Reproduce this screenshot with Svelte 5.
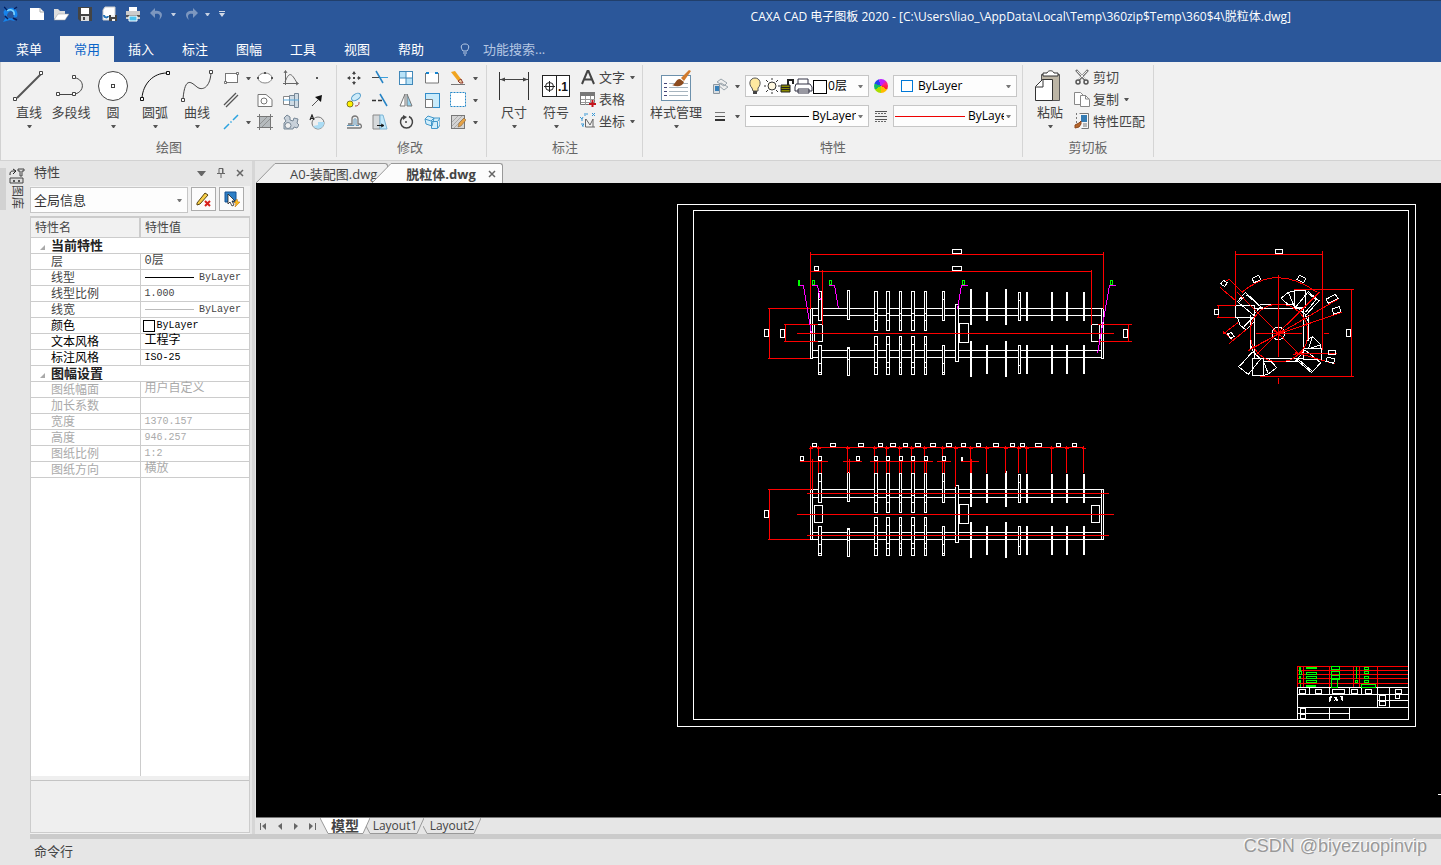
<script lang="ts">
    type Tool = { icon: string; name: string; menu?: boolean };
    type Bar = { x: number; w: number; top: number[]; bottom: number[]; kind: string };

    const menus = ["菜单", "常用", "插入", "标注", "图幅", "工具", "视图", "帮助"];
    let activeMenu = $state("常用");

    const icons: Record<string, string> = {
        rect: `<rect x="2.5" y="3.5" width="12" height="9" fill="#fff" stroke="#777"/><path d="M1.500 11.500h2v2h-2zM13.500 2.500h2v2h-2z" fill="#fff" stroke="#444" stroke-width=".7"/>`,
        parallel: `<path d="M1 13L13 1M3 15L15 3" stroke="#555" stroke-width="1.3"/>`,
        center: `<path d="M1 15L6 10M10 6L15 1M7.500 8.500l1-1" stroke="#2ba3e0" stroke-width="1.5"/>`,
        ellipse: `<ellipse cx="8" cy="8" rx="7" ry="5" fill="#fff" stroke="#888"/><path d="M0 7h2v2H0zM14 7h2v2h-2zM7 2h2v2H7z" fill="#555"/>`,
        hole: `<path d="M1 2.500h8l6 5v7H1z" fill="#fff" stroke="#777"/><circle cx="7" cy="9" r="3" fill="#fff" stroke="#777"/>`,
        hatch: `<rect x="3" y="3" width="10" height="10" fill="#b5babd"/><path d="M2.500 0v16M13.500 0v16M0 2.500h16M0 13.500h16" stroke="#777"/><path d="M3 10l7-7M5 13l8-8" stroke="#777" stroke-width=".6"/>`,
        curve: `<path d="M2.500 1v14M0 13.500h15M2 12C6 2 8 2 14 13" fill="none" stroke="#666"/><path d="M1 3l1.500-2.500L4 3M13 12l2.500 1.500L13 15" fill="none" stroke="#666"/>`,
        shaft: `<path d="M.5 4.500h6v8h-6z" fill="#fff" stroke="#888"/><path d="M6.500 3.500h5v10h-5zM11.500 1.500h4v14h-4z" fill="#cfdbe4" stroke="#778796"/><path d="M0 8h16" stroke="#58a9dc"/>`,
        gear: `<path d="M1 4l3-3 3 2v3l3 1 1-3 4 1-1 4 2 2-2 3-3-1-1 2H1V9l2-2z" fill="#c8d1da" stroke="#778796"/><circle cx="5" cy="11.500" r="3" fill="#f0f0f0" stroke="#778796"/>`,
        point: `<rect x="7" y="7" width="2" height="2" fill="#555"/>`,
        arrow: `<path d="M3 14l6-6" stroke="#555"/><path d="M13 3l-1 7-6-5z" fill="#111"/>`,
        detail: `<circle cx="9" cy="9" r="6" fill="#eee" stroke="#777"/><path d="M9 8h6a6 6 0 0 1-11 4l5-1z" fill="#abdcf4"/><path d="M1 6l2-5 2 5M2 4.500h2" fill="none" stroke="#222" stroke-width="1.200"/>`,
        move: `<path d="M8 2v3M8 11v3M2 8h3M11 8h3" stroke="#444"/><path d="M8 1l2 3H6zM8 15l2-3H6zM1 8l3-2v4zM15 8l-3-2v4z" fill="#444"/><rect x="7" y="7" width="2" height="2" fill="#444"/>`,
        trim: `<path d="M0 7.500h7" stroke="#444"/><path d="M8 7.500h8" stroke="#3ea0dc"/><path d="M4 1l7 12" stroke="#2583c5" stroke-width="1.500"/>`,
        array: `<rect x="1.500" y="1.500" width="13" height="13" fill="#fff" stroke="#4188b9"/><path d="M2 2h6v6H2zM8 8h6v6H8z" fill="#b9e3f8"/><path d="M8 1v14M1 8h14" stroke="#4188b9"/>`,
        stretch: `<path d="M1.500 3v10h13V3" fill="#fff" stroke="#777"/><path d="M2 3h3M11 3h3" stroke="#1683ce" stroke-width="2"/>`,
        pencil: `<path d="M1 14.500h14" stroke="#777"/><path d="M1 2l4-1 6 8-3 2z" fill="#f0a41f"/><path d="M8 11l3-2 2 4h-3z" fill="#e9c9a0" stroke="#8d3527"/>`,
        copy: `<ellipse cx="10" cy="5" rx="5" ry="3" transform="rotate(-35 10 5)" fill="#cceaf8" stroke="#4e9ac9"/><circle cx="4" cy="12" r="3" fill="#fff100" stroke="#7f7a20"/><path d="M9 14c4 0 4-2 4-4" fill="none" stroke="#a53e3e"/>`,
        extend: `<path d="M0 8.500h4M6 8.500h4" stroke="#333" stroke-width="1.500"/><path d="M8 2l7 12" stroke="#2583c5" stroke-width="1.500"/>`,
        mirror: `<path d="M7 2v12H2z" fill="#fff" stroke="#777"/><path d="M9 2v12h5z" fill="#97d3ef" stroke="#777"/>`,
        scale: `<rect x="1.500" y="1.500" width="14" height="14" fill="#c9ebfb" stroke="#338dca"/><path d="M1.500 7.500h7v8h-7z" fill="#fff" stroke="#777"/>`,
        select: `<rect x=".5" y=".5" width="15" height="14" fill="#fff" stroke="#2588c9" stroke-dasharray="2 1"/>`,
        offset: `<path d="M1 14h13c2 0 2-4-1-4h-1V5c0-4-6-4-6 0v5H2" fill="none" stroke="#777" stroke-width="1.300"/><path d="M1 11.500h7v-6c0-1 2-1 2 0v6h3" fill="none" stroke="#6096b9"/>`,
        taper: `<path d="M1 1h7v14H1z" fill="#d6d9db" stroke="#888"/><path d="M8 1h3l4 14H8z" fill="#c2e8fa" stroke="#7db4d4"/><path d="M5 11.500h6M9 10l3 1.500L9 13" fill="none" stroke="#111"/>`,
        rotate: `<path d="M6 2.500a6 6 0 1 0 5 0" fill="none" stroke="#444" stroke-width="1.500"/><path d="M5 1l4 2-4 3z" fill="#444"/><circle cx="8" cy="8" r="1" fill="#444"/>`,
        block: `<path d="M1 5l3-3 6 2-2 8-6-2zM1 5l6 2M7.500 7.500h6v7h-6zM7 7l3-3h6l-2 3M14 14l2-3V4" fill="#d2eefb" stroke="#4398ca"/>`,
        edit: `<rect x="1.500" y="1.500" width="13" height="13" fill="#d4d4d4" stroke="#777"/><path d="M2 12L12 2M4 14L14 4M2 8l6-6" stroke="#aaa"/><path d="M8 13l1-4 5-5 2 2-5 6z" fill="#e5a246" stroke="#785a37" stroke-width=".5"/>`,
        text: `<path d="M2 15L7.500 2h1L14 15M4 10.500h8" fill="none" stroke="#444" stroke-width="2"/>`,
        table: `<path d="M.5 1.500h14v12H.5z" fill="#fff" stroke="#777"/><path d="M0 1h15v4H0z" fill="#777"/><path d="M1 8.500h14M1 11.500h14M5.500 5v9M10.500 5v9" stroke="#999"/><path d="M9 13h7M12.500 9v7" stroke="#c4141b" stroke-width="2"/>`,
        coord: `<path d="M5.500 6v8H15M6 6l4 6 3-6v8" fill="none" stroke="#666"/><path d="M0 4l2 2 1-2M2 6v2M5 0v3M6 1h2M12 0l3 3M15 0l-3 3M1 11h3l-2 2h2" fill="none" stroke="#3697d6"/>`,
        layers: `<path d="M5 4l4-3 6 4-3 3zM6 7l3-2 7 4-4 3z" fill="#eee" stroke="#9aa4ac"/><path d="M1.500 6.500h6v9h-6z" fill="#d7dde2" stroke="#8c97a0"/><rect x="3" y="8" width="4" height="5" fill="#3780ba"/>`,
        lines: `<path d="M3 4.500h10" stroke="#777"/><path d="M3 8.500h10" stroke="#555"/><path d="M3 12h10" stroke="#333" stroke-width="2"/>`,
        cut: `<path d="M2 1l9 10M14 1L5 11" stroke="#777" stroke-width="2.500"/><path d="M3 2l9 9M13 2l-9 9" stroke="#eee"/><circle cx="4" cy="13" r="2" fill="none" stroke="#555" stroke-width="1.500"/><circle cx="12" cy="13" r="2" fill="none" stroke="#555" stroke-width="1.500"/>`,
        duplicate: `<path d="M.5 1.500h6l3 3v9h-9z" fill="#fff" stroke="#888"/><path d="M6.500 4.500h5l4 4v7h-9z" fill="#fff" stroke="#888"/><path d="M11.500 4v4h4" fill="none" stroke="#888"/>`,
        match: `<path d="M5.500.5h9v15h-7" fill="#f7f7f7" stroke="#777"/><path d="M2.500 0v10" stroke="#777" stroke-dasharray="2"/><rect x="7" y="2" width="6" height="7" fill="#347bb3"/><path d="M9 11h4M9 13h4" stroke="#777"/><path d="M1 12l4-2 2-2v3l-2 3-4 1z" stroke="#8f481e" fill="#b5672c"/>`,
        line: `<path d="M4 28L28 4" stroke="#555" stroke-width="2"/><path d="M.5 27.500h3v3h-3zM26.500 1.500h3v3h-3z" fill="#fff" stroke="#444"/>`,
        polyline: `<path d="M4 24.500h12c15 0 15-17 1-17" fill="none" stroke="#444"/><path d="M1.500 22.500h3v3h-3zM17.500 22.500h3v3h-3zM17.500 5.500h3v3h-3z" fill="#fff" stroke="#444"/>`,
        circle: `<circle cx="16" cy="16" r="14.500" fill="#fff" stroke="#444"/><rect x="14.500" y="14.500" width="3" height="3" fill="#fff" stroke="#444"/>`,
        arc: `<path d="M3 28C4 14 14 3 28 3" fill="none" stroke="#111"/><path d="M1.500 27.500h3v3h-3zM27.500 1.500h3v3h-3z" fill="#fff" stroke="#111"/>`,
        spline: `<path d="M2 29C4 5 11 13 16 17S29 18 30 3" fill="none" stroke="#444"/><path d="M.5 28.500h3v3h-3zM28.500.5h3v3h-3z" fill="#fff" stroke="#444"/>`,
        size: `<path d="M1.500 2v28M30.500 2v28" stroke="#333"/><path d="M2 9.500h28" stroke="#444"/><path d="M2 9.500l5-2v4zM30 9.500l-5-2v4z" fill="#444"/>`,
        symbol: `<rect x="2.500" y="5.500" width="27" height="21" fill="#fff" stroke="#222"/><path d="M16.500 5v22M4 16.500h11M9.500 11v11" stroke="#222"/><circle cx="9.500" cy="16.500" r="4" fill="none" stroke="#222"/><text x="18" y="21" font-family="Liberation Sans" font-size="12" font-weight="700" fill="#111">.1</text>`,
        style: `<rect x="1.500" y="5.500" width="29" height="25" fill="#fff" stroke="#6d91ac"/><path d="M4 13.500h3M4 17.500h3M4 21.500h3M4 25.500h3" stroke="#447"/><path d="M9 13.500h19M9 17.500h19M9 21.500h19M9 25.500h19" stroke="#a6b4be"/><path d="M21 8L29 0l2 1-7 10z" fill="#d17a2d"/><path d="M12 15c4 0 3-6 8-6l4 3c-2 5-7 5-12 3z" fill="#8c4b1e"/>`,
        paste: `<path d="M7.500 4.500h18v26h-18z" fill="#bcb5a5" stroke="#555"/><path d="M9 3h4c1-3 6-3 7 0h4v3H9z" fill="#fff" stroke="#333"/><path d="M8.500 9.500h10v21h-17v-14z" fill="#fff" stroke="#333"/><path d="M9 9v8H2" fill="none" stroke="#333"/>`,
        newFile: `<path d="M1 2h10l4 4v8H1z" fill="#fff"/><path d="M11 2v4h4" fill="none" stroke="#aaa"/>`,
        open: `<path d="M1 13V3h4l2 2h5v3" fill="#ddd"/><path d="M1 14l4-6h11l-4 6z" fill="#fff" stroke="#999" stroke-width=".5"/>`,
        save: `<path d="M1 1h14v14H3l-2-2z" fill="#444"/><path d="M4 2h8v6H4z" fill="#fff"/><path d="M4 10h8v5H4z" fill="#ddd"/><path d="M6 11h2v3H6z" fill="#444"/>`,
        saveAs: `<path d="M4 1h10v13H2V4z" fill="#fff" stroke="#ccc"/><path d="M8 9h8v6H8z" fill="#444"/><path d="M10 9h4v2h-4zM11 13h3v2h-3z" fill="#eee"/><path d="M3 9c0 3 4 3 4 1" stroke="#2776b9" fill="none" stroke-width="2"/>`,
        print: `<path d="M4 1h8v5H4z" fill="#fff"/><path d="M1 5h14v8H1z" fill="#ccc"/><path d="M1 9h14v2H1z" fill="#555"/><path d="M4 10h8v5H4z" fill="#4dc3ef" stroke="#fff"/>`,
        undo: `<path d="M6 2L1 7l5 5V8c5-1 6 2 4 6 6-5 2-10-4-9z" fill="#7d97bf"/>`,
        redo: `<path d="M10 2l5 5-5 5V8c-5-1-6 2-4 6-6-5-2-10 4-9z" fill="#7d97bf"/>`,
        logo: `<path d="M1 1l5 2c6-4 11 2 9 8l-4 1c3-5-2-9-5-5s1 6 4 5l3 3-5-1-7 2 3-5C1 8 1 5 3 4z" fill="#1683eb"/><path d="M2 1l4 4M12 3l3-2M3 10l3 3M11 12l4 2" stroke="#061d5c" stroke-width="1.500"/><path d="M5 5c4-3 8 0 7 4" fill="none" stroke="#80d6ff" stroke-width="1.500"/>`,
    };

    const quick: Tool[] = [
        { icon: "newFile", name: "新建" },
        { icon: "open", name: "打开" },
        { icon: "save", name: "保存" },
        { icon: "saveAs", name: "另存为" },
        { icon: "print", name: "打印" },
        { icon: "undo", name: "撤销", menu: true },
        { icon: "redo", name: "重做", menu: true },
    ];

    const drawBig: Tool[] = [
        { icon: "line", name: "直线", menu: true },
        { icon: "polyline", name: "多段线" },
        { icon: "circle", name: "圆", menu: true },
        { icon: "arc", name: "圆弧", menu: true },
        { icon: "spline", name: "曲线", menu: true },
    ];
    const drawSmall: Tool[][] = [
        [{ icon: "rect", name: "矩形", menu: true }, { icon: "parallel", name: "平行线" }, { icon: "center", name: "中心线", menu: true }],
        [{ icon: "ellipse", name: "椭圆" }, { icon: "hole", name: "孔" }, { icon: "hatch", name: "剖面线" }],
        [{ icon: "curve", name: "公式曲线" }, { icon: "shaft", name: "轴" }, { icon: "gear", name: "齿轮" }],
        [{ icon: "point", name: "点" }, { icon: "arrow", name: "箭头" }, { icon: "detail", name: "局部放大" }],
    ];
    const modifySmall: Tool[][] = [
        [{ icon: "move", name: "平移" }, { icon: "copy", name: "平移复制" }, { icon: "offset", name: "等距线" }],
        [{ icon: "trim", name: "裁剪" }, { icon: "extend", name: "延伸" }, { icon: "taper", name: "拉伸" }],
        [{ icon: "array", name: "阵列" }, { icon: "mirror", name: "镜像" }, { icon: "rotate", name: "旋转" }],
        [{ icon: "stretch", name: "打断" }, { icon: "scale", name: "缩放" }, { icon: "block", name: "分解" }],
        [{ icon: "pencil", name: "删除", menu: true }, { icon: "select", name: "过渡", menu: true }, { icon: "edit", name: "编辑", menu: true }],
    ];
    const noteRows: Tool[] = [
        { icon: "text", name: "文字", menu: true },
        { icon: "table", name: "表格" },
        { icon: "coord", name: "坐标", menu: true },
    ];
    const clipRows: Tool[] = [
        { icon: "cut", name: "剪切" },
        { icon: "duplicate", name: "复制", menu: true },
        { icon: "match", name: "特性匹配" },
    ];

    const sections = [
        {
            title: "当前特性",
            rows: [
                { name: "层", value: "0层", tone: "mid" },
                { name: "线型", value: "ByLayer", tone: "mid", sample: "black" },
                { name: "线型比例", value: "1.000", tone: "mid" },
                { name: "线宽", value: "ByLayer", tone: "mid", sample: "#bbb" },
                { name: "颜色", value: "ByLayer", tone: "dark", swatch: true },
                { name: "文本风格", value: "工程字", tone: "dark" },
                { name: "标注风格", value: "ISO-25", tone: "dark" },
            ],
        },
        {
            title: "图幅设置",
            rows: [
                { name: "图纸幅面", value: "用户自定义", tone: "off" },
                { name: "加长系数", value: "", tone: "off" },
                { name: "宽度", value: "1370.157", tone: "off" },
                { name: "高度", value: "946.257", tone: "off" },
                { name: "图纸比例", value: "1:2", tone: "off" },
                { name: "图纸方向", value: "横放", tone: "off" },
            ],
        },
    ] as { title: string; rows: { name: string; value: string; tone: string; sample?: string; swatch?: boolean }[] }[];

    const hasHan = (text: string) => /\p{Script=Han}/u.test(text);

    // top / bottom: start, end, then the cross lines inside the bar
    const long = { top: [291, 330, 313, 320], bottom: [336, 374, 344, 362, 367], kind: "open" };
    const short = { top: [292, 320], bottom: [345, 373], kind: "solid" };
    const tall = { top: [289, 324], bottom: [341, 376], kind: "solid" };
    const bars: Bar[] = [
        { x: 818, w: 3, top: [291, 320, 299], bottom: [345, 374, 363, 372], kind: "open" },
        { x: 847, w: 2, top: [290, 319], bottom: [347, 375, 348, 359], kind: "open" },
        { x: 874, w: 3, ...long },
        { x: 886, w: 3, ...long },
        { x: 899, w: 2, ...long },
        { x: 911, w: 3, ...long },
        { x: 924, w: 2, ...long },
        { x: 942, w: 2, top: [291, 320, 299], bottom: [345, 374, 363, 372], kind: "open" },
        { x: 970, w: 1, ...tall },
        { x: 986, w: 1, ...short },
        { x: 1005, w: 1, ...tall },
        { x: 1018, w: 2, top: [292, 320, 300], bottom: [345, 373, 365], kind: "open" },
        { x: 1026, w: 1, ...short },
        { x: 1051, w: 1, ...short },
        { x: 1066, w: 1, ...short },
        { x: 1083, w: 1, ...short },
    ];
    const chain = [810, 818, 847, 874, 886, 899, 911, 924, 942, 955, 970, 986, 1005, 1018, 1026, 1051, 1066, 1083];
    const chainLabels = [[812, 4], [830, 5], [858, 5], [878, 4], [890, 5], [903, 4], [915, 5], [930, 5], [946, 5], [961, 4], [976, 4], [993, 5], [1010, 4], [1020, 4], [1035, 6], [1056, 4], [1072, 4]];
    const widthLabels = [800, 818, 856, 874, 886, 899, 911, 924, 942];
    const widthMarks = [812, 821, 849, 877, 889, 901, 914, 926, 944, 971];
    const widthLines = [[799, 827], [842, 861], [869, 932], [936, 950], [960, 978]];
    const greenCells = [[6, 2, 2, 9], [26, 3, 32, 4], [101, 0, 26, 10], [176, 2, 2, 9], [200, 3, 14, 6], [5, 14, 8, 11], [26, 18, 32, 7], [101, 14, 24, 22], [176, 14, 2, 12], [200, 15, 14, 7], [6, 29, 4, 7], [26, 30, 32, 6], [101, 27, 24, 12], [176, 29, 2, 6], [200, 30, 14, 7], [6, 42, 4, 7], [26, 42, 32, 6], [101, 39, 20, 23], [173, 41, 8, 7], [200, 41, 14, 8], [9, 54, 1, 7], [26, 57, 28, 4], [191, 54, 44, 8]];
    const whiteCells = [[6, 68, 18, 13], [54, 68, 18, 13], [105, 68, 36, 13], [162, 68, 18, 13], [204, 68, 18, 13], [293, 68, 19, 13], [246, 86, 17, 15], [246, 104, 18, 14], [293, 84, 13, 12], [9, 126, 15, 14], [9, 143, 15, 14]];
    const blades = [
        "M112 200L136 172L182 215L160 240Z",
        "M140 180L180 213M115 204L130 186",
        "M108 213H163V247H108Z",
        "M112 247L120 270L138 285L163 260M132 275L160 247",
        "M243 190L265 172L283 168M243 190L272 215M265 172L283 215",
        "M283 166H316V218H283Z",
        "M288 215L325 170L357 197L318 240Z",
        "M348 195L316 232M325 175L350 195",
        "M318 318L338 304L362 330L363 340M338 304L326 338M362 330L330 340",
        "M310 340H365V373H310Z",
        "M290 375L335 413L362 383L315 345Z",
        "M296 374L336 408",
        "M157 372H190V422H157Z",
        "M115 395L145 418L182 372L160 350Z",
        "M120 392L158 350",
        "M190 422L205 417L230 398L207 372M205 417L190 378",
    ];
    const tags = ["M62 147l8-11 12 7-8 12z", "M156 130l20-9 6 13-20 9z", "M298 121l19 9-6 13-20-9z", "M378 193l28-15 8 12-28 15z", "M396 222l22-7 5 15-22 7z", "M83 297l10-5 9 12-10 7z", "M387 346h19v13h-19z", "M382 366l23 6-4 13-23-6z"];
</script>

{#snippet glyph(name: string, size: number)}
    <svg width={size} height={size} viewBox="0 0 {size} {size}" aria-hidden="true">{@html icons[name]}</svg>
{/snippet}

{#snippet caret()}
    <svg class="caret" width="5" height="3" viewBox="0 0 5 3" aria-hidden="true"><path d="M0 0h5L3 3H2z" /></svg>
{/snippet}

{#snippet bigTool(tool: Tool)}
    <button class="big">
        {@render glyph(tool.icon, 32)}
        <span>{tool.name}</span>
        {#if tool.menu}{@render caret()}{/if}
    </button>
{/snippet}

{#snippet toolColumns(columns: Tool[][])}
    {#each columns as column}
        <div class="column">
            {#each column as tool}
                <button class="small" class:has-menu={tool.menu} aria-label={tool.name}>
                    {@render glyph(tool.icon, 16)}
                    {#if tool.menu}{@render caret()}{/if}
                </button>
            {/each}
        </div>
    {/each}
{/snippet}

{#snippet toolRows(rows: Tool[])}
    <div class="column rows">
        {#each rows as tool}
            <button class="row-tool">
                {@render glyph(tool.icon, 16)}
                <span>{tool.name}</span>
                {#if tool.menu}{@render caret()}{/if}
            </button>
        {/each}
    </div>
{/snippet}

{#snippet drum(dy: number)}
    <path class="white" d="M810 {308 + dy}H1103M812 {315 + dy + (dy ? 1 : 0)}H1101M812 {350 + dy + (dy ? 1 : 0)}H1101M810 {357 + dy + (dy ? 1 : 0)}H1103" />
    {#each bars as bar}
        {@const up = dy ? dy + 1 : 0}
        <rect class={bar.kind} x={bar.x} y={bar.top[0] + up} width={bar.w} height={bar.top[1] - bar.top[0]} />
        <rect class={bar.kind} x={bar.x} y={bar.bottom[0] + dy} width={bar.w} height={bar.bottom[1] - bar.bottom[0]} />
        {#each bar.top.slice(2) as y}
            <path class="white" d="M{bar.x} {y + up}h{bar.w}" />
        {/each}
        {#each bar.bottom.slice(2) as y}
            <path class="white" d="M{bar.x} {y + dy}h{bar.w}" />
        {/each}
    {/each}
    <rect class="open" x="810" y={308 + dy} width="2" height="50" />
    <rect class="open" x="1101" y={308 + dy} width="2" height="50" />
    <rect class="open" x="955" y={304 + dy} width="3" height="57" />
    <rect class="open" x="959" y={323 + dy} width="9" height="19" />
    <rect class="white" x="814" y={324 + dy} width="8" height="17" />
    <rect class="white" x="1091" y={324 + dy} width="8" height="17" />
    <path class="red" d="M796 {333 + dy}H1113M767 {308 + dy}H809M767 {358 + dy}H809M769 {308 + dy}v50" />
    <rect class="white" x="764" y={329 + dy} width="4" height="7" />
{/snippet}

<div class="app">
    <header>
        <div class="titlebar">
            <button class="logo" aria-label="CAXA">{@render glyph("logo", 16)}</button>
            {#each quick as tool}
                <button class="quick" aria-label={tool.name}>{@render glyph(tool.icon, 16)}</button>
                {#if tool.menu}
                    <button class="quick-menu" aria-label="{tool.name}列表">{@render caret()}</button>
                {/if}
            {/each}
            <button class="quick-menu" aria-label="自定义">
                <svg width="6" height="7" viewBox="0 0 6 7"><path d="M0 0h6v1H0zM0 2h6L3 6z" fill="#d3dae6" /></svg>
            </button>
            <h1>CAXA CAD 电子图板 2020 - [C:\Users\liao_\AppData\Local\Temp\360zip$Temp\360$4\脱粒体.dwg]</h1>
        </div>
        <nav>
            {#each menus as menu}
                <button class:active={menu === activeMenu} onclick={() => (activeMenu = menu)}>{menu}</button>
            {/each}
            <label class="search">
                <svg width="10" height="14" viewBox="0 0 10 14"><path d="M3 9C0 5 1 2 5 2s5 3 2 7zM3 11h4M4 13h2" fill="none" stroke="#b9cbe6" /></svg>
                <input type="text" placeholder="功能搜索..." />
            </label>
        </nav>
    </header>

    <div class="ribbon">
        <section class="draw">
            <div class="tools">
                {#each drawBig as tool}{@render bigTool(tool)}{/each}
                {@render toolColumns(drawSmall)}
            </div>
            <h2>绘图</h2>
        </section>
        <section class="modify">
            <div class="tools">{@render toolColumns(modifySmall)}</div>
            <h2>修改</h2>
        </section>
        <section>
            <div class="tools">
                {@render bigTool({ icon: "size", name: "尺寸", menu: true })}
                {@render bigTool({ icon: "symbol", name: "符号", menu: true })}
                {@render toolRows(noteRows)}
            </div>
            <h2>标注</h2>
        </section>
        <section class="props">
            <div class="tools">
                {@render bigTool({ icon: "style", name: "样式管理", menu: true })}
                <div class="combos">
                    <button class="small" aria-label="图层">{@render glyph("layers", 16)}{@render caret()}</button>
                    <div class="combo">
                        <svg width="82" height="18" viewBox="0 0 82 18" aria-hidden="true">
                            <path d="M6 11C2 7 4 1 9 1s7 6 3 10v3H7z" fill="#ffe9a0" stroke="#555" />
                            <path d="M7 14h4v3H7z" fill="#444" />
                            <circle cx="26" cy="9" r="4" fill="#fff8df" stroke="#333" />
                            <path d="M26 1v2M26 15v2M18 9h2M32 9h2M20 3l2 2M32 3l-2 2M20 15l2-2M32 15l-2-2" stroke="#333" />
                            <path d="M35 8h9v7h-9z" fill="#8b8a00" stroke="#222" />
                            <path d="M35 10.500h9M35 12.500h9" stroke="#222" />
                            <path d="M42 8V3h5v4" fill="none" stroke="#222" stroke-width="2" />
                            <path d="M52 7V2h10v5M50 7h14l2 3v4H49v-4zM52 12h11v4H52z" fill="#fff" stroke="#334" />
                            <rect x="67.500" y="3.500" width="13" height="13" fill="#fff" stroke="#000" />
                        </svg>
                        <select aria-label="当前层"><option>0层</option></select>
                        {@render caret()}
                    </div>
                    <button class="wheel" aria-label="颜色"></button>
                    <div class="combo">
                        <svg width="24" height="14" viewBox="0 0 24 14" aria-hidden="true"><rect x="7.500" y="1.500" width="11" height="11" fill="#fff" stroke="#0078d7" /></svg>
                        <select aria-label="当前颜色"><option>ByLayer</option></select>
                        {@render caret()}
                    </div>
                    <button class="small" aria-label="线宽">{@render glyph("lines", 16)}{@render caret()}</button>
                    <div class="combo">
                        <svg width="66" height="3" viewBox="0 0 66 3" aria-hidden="true"><path d="M4 1.500h59" stroke="#000" /></svg>
                        <select aria-label="当前线型"><option>ByLayer</option></select>
                        {@render caret()}
                    </div>
                    <button class="line-style" aria-label="线宽设置">
                        <svg width="12" height="11" viewBox="0 0 12 11"><path d="M0 .5h12M0 5.500h12M0 8.500h12" stroke="#555" /><path d="M0 2.500h12M0 10.500h12" stroke="#666" stroke-dasharray="2 1" /></svg>
                    </button>
                    <div class="combo">
                        <svg width="74" height="3" viewBox="0 0 74 3" aria-hidden="true"><path d="M1 1.500h70" stroke="#e00" /></svg>
                        <select aria-label="当前线宽"><option>ByLayer</option></select>
                        {@render caret()}
                    </div>
                </div>
            </div>
            <h2>特性</h2>
        </section>
        <section class="clip">
            <div class="tools">
                {@render bigTool({ icon: "paste", name: "粘贴", menu: true })}
                {@render toolRows(clipRows)}
            </div>
            <h2>剪切板</h2>
        </section>
    </div>

    <main>
        <aside class="dock">
            <button class="library">
                <svg width="16" height="16" viewBox="0 0 16 16" aria-hidden="true">
                    <path d="M1 7c0-4 1-4 5-4M4 1l3 2-3 3" fill="none" stroke="#222" />
                    <path d="M9 1h6v2h-2v5h-2V3H9zM1 10h13v5H1z" fill="#ddd" stroke="#444" />
                    <path d="M4 12h2v2H4zM9 12h2v2H9z" fill="#555" />
                </svg>
                <span>图库</span>
            </button>
        </aside>

        <aside class="panel">
            <div class="panel-head">
                <h3>特性</h3>
                <button aria-label="菜单"><svg width="9" height="5" viewBox="0 0 9 5"><path d="M0 0h9L5 5H4z" fill="#666" /></svg></button>
                <button aria-label="固定"><svg width="8" height="10" viewBox="0 0 8 10"><path d="M2 .5h4v5H2zM0 5.500h8M4 6v4M5.500 1v4" fill="none" stroke="#666" /></svg></button>
                <button aria-label="关闭"><svg width="8" height="8" viewBox="0 0 8 8"><path d="M1 1l6 6M7 1L1 7" stroke="#666" stroke-width="1.500" /></svg></button>
            </div>
            <div class="panel-bar">
                <div class="combo scope">
                    <select aria-label="对象"><option>全局信息</option></select>
                    {@render caret()}
                </div>
                <button aria-label="取消选择">
                    <svg width="16" height="16" viewBox="0 0 16 16"><path d="M1 12L9 2l3 2-8 9-3 1z" fill="#f7cf47" stroke="#584312" /><path d="M9 10l5 5M14 10l-5 5" stroke="#d8221c" stroke-width="2" /></svg>
                </button>
                <button aria-label="快速选择">
                    <svg width="16" height="16" viewBox="0 0 16 16"><path d="M1 1h11v10H1z" fill="#2d7fc6" stroke="#145394" /><path d="M4 3v10l2-2 2 4 2-1-2-4h3z" fill="#fff" stroke="#222" stroke-width=".8" /><path d="M13 8l-3 4h2l-1 4 5-5h-2z" fill="#ffbe1a" stroke="#b56810" stroke-width=".5" /></svg>
                </button>
            </div>
            <div class="sheet">
                <table>
                    <thead>
                        <tr><th>特性名</th><th>特性值</th></tr>
                    </thead>
                    <tbody>
                        {#each sections as section}
                            <tr class="section"><td colspan="2"><i></i>{section.title}</td></tr>
                            {#each section.rows as row}
                                <tr class={row.tone}>
                                    <td>{row.name}</td>
                                    <td>
                                        <div class="value" class:han={hasHan(row.value)}>
                                            {#if row.sample}<span class="sample" style="background: {row.sample}"></span>{/if}
                                            {#if row.swatch}<span class="swatch"></span>{/if}
                                            {row.value}
                                        </div>
                                    </td>
                                </tr>
                            {/each}
                        {/each}
                    </tbody>
                </table>
                <div class="blank"><div></div><div></div></div>
                <div class="hint"></div>
            </div>
        </aside>

        <div class="workspace">
            <div class="doc-tabs">
                <button>
                    <svg width="20" height="20" viewBox="0 0 20 20" aria-hidden="true"><path d="M0 20L19 .5H20V20z" fill="#f0f0f0" /><path d="M0 20L19 .5h1" fill="none" stroke="#999" /></svg>
                    <span>A0-装配图.dwg</span>
                </button>
                <button class="current">
                    <svg width="20" height="20" viewBox="0 0 20 20" aria-hidden="true"><path d="M0 20L19 .5H20V20z" fill="#fcfcfc" /><path d="M0 20L19 .5h1" fill="none" stroke="#999" /></svg>
                    <span>
                        脱粒体.dwg
                        <svg width="8" height="8" viewBox="0 0 8 8" aria-hidden="true"><path d="M1 1l6 6M7 1L1 7" stroke="#666" stroke-width="1.500" /></svg>
                    </span>
                </button>
            </div>

            <svg class="drawing" viewBox="256 183 1185 634" preserveAspectRatio="xMidYMid meet" role="img" aria-label="脱粒体">
                <g transform="translate(.5 .5)">
                    <rect class="white" x="677" y="204" width="738" height="522" />
                    <rect class="white" x="693" y="210" width="715" height="509" />

                    {@render drum(0)}
                    <path class="red" d="M810 254H1103M810 251V308M1103 251V308M810 271H1091M822 269V324M1091 269V324" />
                    <path class="red" d="M783 324H817M783 341H817M785 324V341M1097 324H1131M1097 341H1131M1128 324V341" />
                    <path class="white" d="M952 249h9v4h-9zM952 266h9v4h-9zM814 266h4v4h-4zM780 329h4v8h-4zM1123 329h4v8h-4z" />
                    <path class="magenta" d="M797 285H803L811 333M811 285H817L820 300M828 285H834L838 308M967 285H961L957 309M1115 285H1109L1097 353" />
                    <path class="green" d="M798 280h1v5h-1zM812 280h2v4h-2zM829 280h2v4h-2zM962 280h2v4h-2zM1110 280h2v4h-2z" />

                    {@render drum(181)}
                    <path class="red" d="M806 493H1108M806 535H1108M810 447H1083" />
                    {#each chain as x}
                        <path class="red" d="M{x} 445V{x === 810 ? 489 : x === 955 ? 486 : 472}M{x - 2} 448h4" />
                    {/each}
                    {#each widthMarks as x}
                        <path class="red" d="M{x} 458V{x === 812 ? 489 : 472}" />
                    {/each}
                    {#each widthLines as [from, to]}
                        <path class="red" d="M{from} 461H{to}" />
                    {/each}
                    {#each chainLabels as [x, w]}
                        <rect class="open" {x} y="443" width={w} height="3" />
                    {/each}
                    {#each widthLabels as x}
                        <rect class="open" {x} y="456" width="3" height="4" />
                    {/each}
                    <path class="white" d="M961 456v4M962 456v4" />
                </g>

                <!-- end view, three units to a pixel -->
                <g transform="translate(1200 235) scale(.3333)">
                    {#each blades as d}
                        <path class="white" {d} />
                    {/each}
                    <rect class="white" x="163" y="220" width="148" height="151" />
                    <path class="white" d="M180 208H285M192 380H297M151 240V345M325 240V318M175 210L190 220M285 378L300 370M316 240L325 260M151 330L160 350" />
                    <circle class="white" cx="235" cy="295" r="19" />
                    <circle class="red" cx="237" cy="294" r="87" />
                    <path class="red" d="M107 58H367M107 48V213M367 48V345M283 163H462M180 424H462M455 163V424" />
                    <path class="red" d="M235 120V366M235 430V447M168 295H306M371 295H387M125 172Q180 127 235 128T352 172" />
                    <path class="red" d="M112 172L300 360M358 172L168 360M145 347L235 297L418 190M155 340L235 297L425 232M285 357H412M285 352L405 387M220 285l30 24M220 305l30-20" />
                    <path class="red" d="M75 140L88 133L130 175M60 157L108 198M50 213H108M50 247H105M57 213V247M68 298L115 262M88 325L140 283M70 290L98 317M280 360L310 350" />
                    <path class="white" d="M226 43h21v12h-21zM44 223h12v15h-12zM440 283h12v21h-12z" />
                    {#each tags as d}
                        <path class="white" {d} />
                    {/each}
                </g>

                <!-- parts list and title block -->
                <g transform="translate(1297 666) scale(.3333)">
                    <path class="red" d="M1 1H334M1 13H334M1 25H334M1 39H334M1 52H334M1 1V64M19 1V64M97 1V64M169 1V64M187 1V64M241 1V64" />
                    <path class="white" d="M1 64H334M1 85H334M1 124H334M1 64V160M37 64V85M97 64V85M97 124V160M157 64V85M157 124V160M193 64V85M241 64V124M277 64V124M1 142H157M241 103H334" />
                    <g transform="translate(2 2)">
                        {#each greenCells as [x, y, w, h]}
                            <rect class="green" {x} {y} width={w} height={h} />
                        {/each}
                        {#each whiteCells as [x, y, w, h]}
                            <rect class="white" {x} {y} width={w} height={h} />
                        {/each}
                    </g>
                    <path class="white" d="M98 92V108M101 90V104M104 90V96M112 92L121 106M115 92L124 106M121 92L112 106M130 92H137V106M133 92V101H137" />
                </g>
                <path class="white" d="M1438 794h3" />
            </svg>

            <div class="sheet-tabs">
                <button aria-label="第一页"><svg width="8" height="8" viewBox="0 0 8 8"><path d="M0 1h1v7H0zM6 1v7L2 4z" fill="#666" /></svg></button>
                <button aria-label="上一页"><svg width="8" height="8" viewBox="0 0 8 8"><path d="M6 1v7L2 4z" fill="#666" /></svg></button>
                <button aria-label="下一页"><svg width="8" height="8" viewBox="0 0 8 8"><path d="M2 1v7l4-4z" fill="#666" /></svg></button>
                <button aria-label="最后一页"><svg width="8" height="8" viewBox="0 0 8 8"><path d="M1 1v7l4-4zM7 1h1v7H7z" fill="#666" /></svg></button>
                <button class="sheet-tab model">
                    <svg viewBox="0 0 50 16" preserveAspectRatio="none" aria-hidden="true"><path d="M0 0L8 15.500H43L50 0" fill="#fff" stroke="#999" /></svg>
                    <span>模型</span>
                </button>
                <button class="sheet-tab">
                    <svg viewBox="0 0 58 16" preserveAspectRatio="none" aria-hidden="true"><path d="M0 8L4 15.500H51L58 0" fill="none" stroke="#999" /></svg>
                    <span>Layout1</span>
                </button>
                <button class="sheet-tab">
                    <svg viewBox="0 0 58 16" preserveAspectRatio="none" aria-hidden="true"><path d="M0 8L4 15.500H51L58 0" fill="none" stroke="#999" /></svg>
                    <span>Layout2</span>
                </button>
            </div>
        </div>
    </main>

    <footer>
        <span>命令行</span>
    </footer>
    <p class="watermark">CSDN @biyezuopinvip</p>
</div>

<style>
    :global(body) {
        margin: 0;
    }
    .app {
        position: relative;
        min-height: 100vh;
        display: flex;
        flex-direction: column;
        background: #e6e6e6;
        color: #444;
        font: 13px/20px "Open Sans", "Noto Sans CJK SC", sans-serif;
    }
    button,
    select,
    input {
        margin: 0;
        padding: 0;
        border: 0;
        background: none;
        color: inherit;
        font: inherit;
    }
    svg {
        display: block;
        flex: none;
    }
    h1,
    h2,
    h3,
    p {
        margin: 0;
        font-weight: 400;
    }

    header {
        background: #2b579a;
        color: #fff;
        border-top: 1px solid #213f6b;
    }
    .titlebar {
        display: flex;
        align-items: center;
        height: 26px;
        padding-bottom: 9px;
    }
    .logo {
        width: 25px;
        padding-left: 2px;
    }
    .quick {
        display: flex;
        justify-content: center;
        width: 24px;
    }
    .quick-menu {
        display: flex;
        justify-content: center;
        width: 9px;
        margin-right: 1px;
    }
    .quick-menu + .quick-menu {
        width: 18px;
    }
    .titlebar .caret {
        fill: #c5d0e2;
    }
    h1 {
        margin-left: auto;
        margin-right: 150px;
        padding-top: 6px;
        font-size: 12px;
        line-height: 20px;
        white-space: nowrap;
    }
    nav {
        display: flex;
        padding-left: 2px;
    }
    nav button {
        width: 54px;
        height: 26px;
        line-height: 24px;
        text-align: center;
    }
    nav button:first-child {
        margin-right: 4px;
    }
    nav .active {
        background: #f1f1f1;
        color: #0a64c8;
    }
    nav button:hover:not(.active) {
        background: #3c69ac;
    }
    .search {
        display: flex;
        align-items: center;
        gap: 13px;
        margin-left: 22px;
    }
    .search input {
        width: 100px;
        height: 24px;
        outline: none;
    }
    .search input::placeholder {
        color: #b4c6e2;
        opacity: 1;
    }

    .ribbon {
        display: flex;
        background: #f1f1f1;
        border-bottom: 1px solid #d2d2d2;
        border-left: 1px solid #d2d2d2;
        padding: 3px 0;
    }
    section {
        border-right: 1px solid #d5d5d5;
        padding: 1px 5px 0 6px;
    }
    section.draw {
        padding-left: 7px;
        padding-right: 6px;
    }
    section.modify {
        padding-left: 4px;
        padding-right: 7px;
    }
    section.clip {
        padding-right: 6px;
    }
    h2 {
        font-size: 13px;
        line-height: 20px;
        text-align: center;
        color: #666;
    }
    .tools {
        display: flex;
        height: 71px;
    }
    .caret {
        fill: #555;
    }
    .big {
        display: flex;
        flex-direction: column;
        align-items: center;
        min-width: 42px;
        padding-top: 4px;
        white-space: nowrap;
    }
    .big .caret {
        margin-top: 3px;
    }
    .column {
        display: flex;
        flex-direction: column;
        padding-top: 1px;
    }
    .rows {
        padding-top: 0;
    }
    .small {
        display: flex;
        align-items: center;
        gap: 7px;
        height: 22px;
        padding: 0 5px;
    }
    .has-menu {
        padding-right: 1px;
    }
    .row-tool {
        display: flex;
        align-items: center;
        gap: 3px;
        height: 22px;
        padding: 0 2px 0 3px;
    }
    .row-tool .caret {
        margin-left: 2px;
    }
    .big:hover,
    .small:hover,
    .row-tool:hover {
        background: #d5e3f5;
    }
    .props .big {
        min-width: 54px;
    }
    .combos {
        display: grid;
        grid-template-columns: 38px 124px 24px 124px;
        grid-auto-rows: 30px;
        align-items: center;
        align-content: start;
        padding: 5px 0 0 4px;
    }
    .combo {
        display: flex;
        align-items: center;
        box-sizing: border-box;
        height: 22px;
        padding-right: 5px;
        background: #fdfdfd;
        border: 1px solid #c6c6c6;
        overflow: hidden;
    }
    .combo select {
        flex: 1;
        min-width: 0;
        appearance: none;
        color: #000;
        font-size: 12px;
        outline: none;
        text-overflow: clip;
    }
    .combo .caret {
        fill: #777;
        margin-left: 2px;
    }
    .wheel {
        justify-self: center;
        width: 14px;
        height: 14px;
        border-radius: 50%;
        background: conic-gradient(#b2f 0 30deg, #f28 60deg, #f22 120deg, #fb0 0 180deg, #ad0 0 240deg, #1b6 0 290deg, #24e 0 340deg, #b2f 0);
    }
    .line-style {
        justify-self: center;
    }

    main {
        flex: 1;
        display: flex;
    }
    .dock {
        width: 30px;
        padding-top: 7px;
    }
    .library {
        display: flex;
        flex-direction: column;
        align-items: center;
        width: 28px;
        height: 42px;
        border-left: 6px solid #d2d2d2;
        font-size: 12px;
        line-height: 14px;
    }
    .library span {
        margin-top: 1px;
        writing-mode: vertical-rl;
        text-orientation: sideways;
    }
    .panel {
        display: flex;
        flex-direction: column;
        width: 220px;
        background: #f1f1f1;
    }
    .panel-head {
        display: flex;
        align-items: center;
        height: 22px;
        padding: 0 1px 3px 0;
        background: #e6e6e6;
    }
    .panel-head h3 {
        flex: 1;
        padding-left: 4px;
        font-size: 13px;
    }
    .panel-head button {
        display: flex;
        justify-content: center;
        width: 19px;
        padding-top: 2px;
    }
    .panel-bar {
        display: flex;
        gap: 3px;
        padding: 1px 6px 3px 0;
    }
    .panel-bar button {
        display: flex;
        align-items: center;
        justify-content: center;
        width: 25px;
        height: 24px;
        border: 1px solid #acacac;
        background: #fcfcfc;
    }
    .scope {
        flex: 1;
        height: 26px;
        padding-left: 3px;
    }
    .scope select {
        font-size: 13px;
        color: #333;
    }
    .sheet {
        flex: 1;
        display: flex;
        flex-direction: column;
        margin: 0 0 1px;
        border: 1px solid #ccc;
        background: #fff;
    }
    table {
        width: 100%;
        table-layout: fixed;
        border-collapse: collapse;
        font-size: 12px;
        line-height: 15px;
    }
    th {
        height: 19px;
        padding: 0 0 0 4px;
        background: #f1f1f1;
        border: 1px solid #ccc;
        border-width: 1px 0;
        text-align: left;
        font-weight: 400;
    }
    th + th {
        border-left-width: 2px;
    }
    td {
        height: 15px;
        padding: 0 0 0 20px;
        border-bottom: 1px solid #ccc;
    }
    td + td {
        padding: 0 8px 0 4px;
        border-left: 1px solid #ccc;
        font-family: "Liberation Mono", "Noto Sans CJK SC", monospace;
    }
    .section td {
        padding-left: 9px;
        font-size: 13px;
        font-weight: 700;
        color: #222;
    }
    .section i {
        display: inline-block;
        margin-right: 6px;
        border-bottom: 5px solid #aaa;
        border-left: 5px solid transparent;
    }
    .dark {
        color: #000;
    }
    .off {
        color: #aaa;
    }
    .value {
        display: flex;
        align-items: center;
        height: 15px;
        font-size: 10px;
    }
    .han {
        font-size: 12px;
    }
    .sample {
        flex: 1;
        height: 1px;
        margin-right: 5px;
    }
    .swatch {
        width: 10px;
        height: 10px;
        margin: 0 2px 0 -2px;
        border: 1px solid #000;
    }
    .blank {
        flex: 1;
        display: flex;
    }
    .blank div {
        flex: 1;
    }
    .blank div + div {
        border-left: 1px solid #ccc;
    }
    .hint {
        height: 51px;
        border-top: 1px solid #c4c4c4;
        background: #efefef;
        box-shadow: 0 -4px #efefef;
    }

    .workspace {
        flex: 1;
        min-width: 0;
        display: flex;
        flex-direction: column;
        margin-left: 2px;
        border-left: 3px solid #d6d6d6;
        padding-left: 1px;
    }
    .doc-tabs {
        display: flex;
        height: 20px;
        padding-top: 2px;
    }
    .doc-tabs button {
        display: flex;
        height: 20px;
    }
    .doc-tabs span {
        display: flex;
        align-items: center;
        gap: 12px;
        height: 19px;
        padding: 0 10px 0 14px;
        border: 1px solid #999;
        border-width: 1px 1px 0 0;
        border-radius: 0 3px 0 0;
        background: #f0f0f0;
        line-height: 18px;
        white-space: nowrap;
    }
    .doc-tabs .current {
        margin-left: -16px;
    }
    .current span {
        padding-right: 6px;
        background: #fcfcfc;
        font-weight: 700;
    }
    .drawing {
        flex: 1 1 0;
        width: 100%;
        min-height: 0;
        background: #000;
        shape-rendering: crispEdges;
    }
    .drawing path,
    .drawing rect,
    .drawing circle {
        fill: none;
        vector-effect: non-scaling-stroke;
    }
    .white,
    .open,
    .solid {
        stroke: #fff;
    }
    .drawing .open {
        fill: #000;
    }
    .red {
        stroke: #f00;
    }
    .magenta {
        stroke: #f0f;
    }
    .green {
        stroke: #0f0;
    }
    .sheet-tabs {
        display: flex;
        height: 16px;
        font-size: 12px;
        line-height: 16px;
        border-top: 1px solid #777;
    }
    .sheet-tabs > button {
        display: flex;
        align-items: center;
        justify-content: center;
        width: 16px;
    }
    .sheet-tabs > .sheet-tab {
        position: relative;
        width: 58px;
        margin-right: -1px;
    }
    .sheet-tabs > .model {
        width: 50px;
        margin-right: -4px;
        font-size: 14px;
        line-height: 14px;
        font-weight: 700;
    }
    .sheet-tab svg {
        position: absolute;
        inset: 0;
        width: 100%;
        height: 16px;
    }
    .sheet-tab span {
        position: relative;
    }

    footer {
        border-top: 5px solid #cbcbcb;
        margin-left: 30px;
        padding: 2px 4px 4px;
    }
    .watermark {
        position: absolute;
        right: 14px;
        bottom: 7px;
        color: #999;
        font: 18px/24px "Liberation Sans", sans-serif;
        text-shadow: -1px -1px #fff;
    }
</style>
